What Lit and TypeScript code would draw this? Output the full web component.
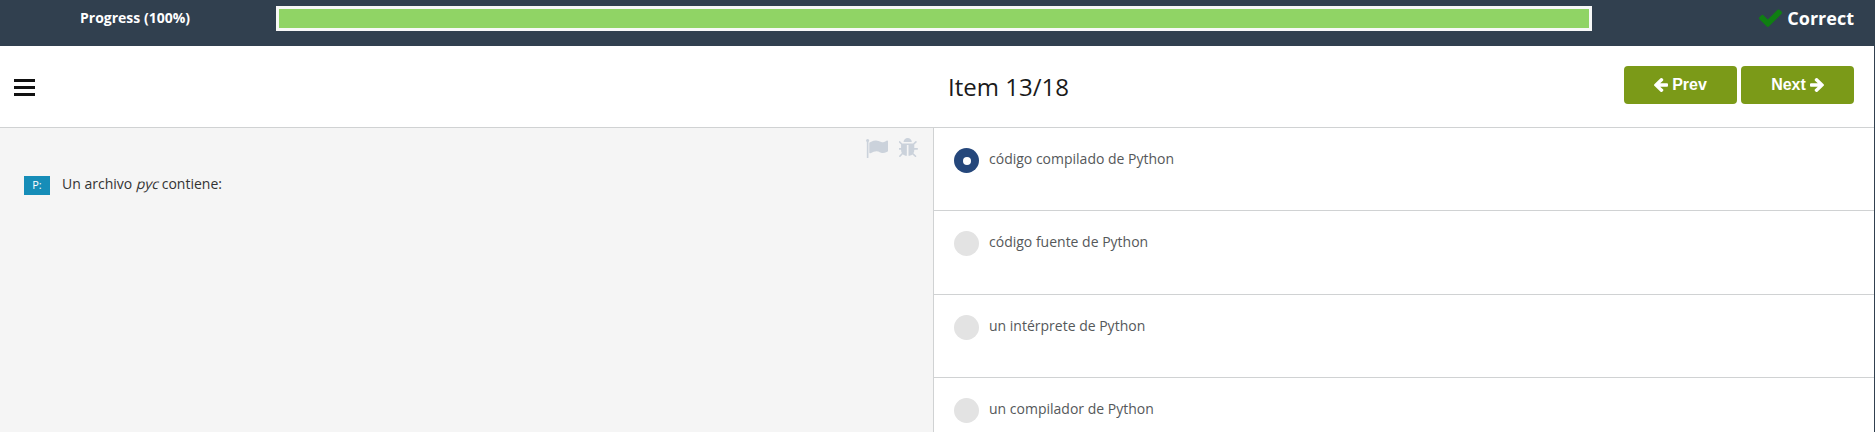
import { LitElement, html, css, svg } from "lit";
import { customElement, property } from "lit/decorators.js";

type IconName = "check" | "arrow" | "flag" | "bug" | "bars";

const ICONS: Record<IconName, { box: string; d: string }> = {
  check: {
    box: "121 306 1550 1216",
    d: "M1671 566q0 40-28 68l-724 724-136 136q-28 28-68 28t-68-28l-136-136-362-362q-28-28-28-68t28-68l136-136q28-28 68-28t68 28l294 295 656-657q28-28 68-28t68 28l136 136q28 28 28 68z",
  },
  arrow: {
    box: "192 181 1472 1558",
    d: "M1664 896v128q0 53-32.5 90.5t-84.5 37.5h-704l293 294q38 36 38 90t-38 90l-75 76q-37 37-90 37-52 0-91-37l-651-652q-37-37-37-90 0-52 37-91l651-650q38-38 91-38 52 0 90 38l75 74q38 38 38 91t-38 91l-293 293h704q52 0 84.5 37.5t32.5 90.5z",
  },
  flag: {
    box: "64 128 1728 1536",
    d: "M320 256q0 72-64 110v1266q0 13-9.5 22.5t-22.5 9.5h-64q-13 0-22.5-9.5t-9.5-22.5v-1266q-64-38-64-110 0-53 37.5-90.5t90.5-37.5 90.5 37.5 37.5 90.5zm1472 64v763q0 25-12.5 38.5t-39.5 27.5q-215 116-369 116-61 0-123.5-22t-108.5-48-115.5-48-142.5-22q-192 0-464 146-17 9-33 9-26 0-45-19t-19-45v-742q0-32 31-55 21-14 79-43 236-120 421-120 107 0 200 29t219 88q38 19 88 19 54 0 117.5-21t110-47 88-47 54.5-21q26 0 45 19t19 45z",
  },
  bug: {
    box: "160 96 1472 1568",
    d: "M1632 992q0 26-19 45t-45 19h-224q0 171-67 290l208 209q19 19 19 45t-19 45q-18 19-45 19t-45-19l-198-197q-5 5-15 13t-42 28.5-65 36.5-82 29-97 13v-896h-128v896q-51 0-101.5-13.5t-87-33-66-39-43.5-32.5l-15-14-183 207q-20 21-48 21-24 0-43-16-19-18-20.5-44.5t15.5-46.5l202-227q-58-114-58-274h-224q-26 0-45-19t-19-45 19-45 45-19h224v-294l-173-173q-19-19-19-45t19-45 45-19 45 19l173 173h844l173-173q19-19 45-19t45 19 19 45-19 45l-173 173v294h224q26 0 45 19t19 45zm-480-576h-640q0-133 93.5-226.5t226.5-93.5 226.5 93.5 93.5 226.5z",
  },
  bars: { box: "0 0 21 17", d: "M0 0h21v3H0zM0 7h21v3H0zM0 14h21v3H0z" },
};

const icon = (name: IconName, cls: string) => html`
  <svg class=${cls} viewBox=${ICONS[name].box} preserveAspectRatio="none" aria-hidden="true">
    ${svg`<path fill="currentColor" d=${ICONS[name].d}></path>`}
  </svg>
`;

@customElement("answer-option")
class AnswerOption extends LitElement {
  @property() label = "";
  @property({ type: Boolean }) checked = false;

  static styles = css`
    :host {
      display: flex;
      align-items: flex-start;
      box-sizing: border-box;
      height: 83.4px;
      padding: 20px 20px 0;
      border-bottom: 1px solid #d0d2d3;
    }
    .radio {
      flex: none;
      display: grid;
      place-items: center;
      width: 25px;
      height: 25px;
      border-radius: 50%;
      background: #e3e3e3;
    }
    .on {
      background: #25477b;
    }
    .dot {
      width: 8px;
      height: 8px;
      border-radius: 50%;
      background: #fff;
    }
    .label {
      margin-left: 10px;
      font-size: 14px;
      line-height: 22px;
      color: #55585a;
    }
  `;

  render() {
    return html`
      <span class="radio ${this.checked ? "on" : ""}">
        ${this.checked ? html`<span class="dot"></span>` : null}
      </span>
      <span class="label">${this.label}</span>
    `;
  }
}

@customElement("app-root")
class AppRoot extends LitElement {
  private answers = [
    "código compilado de Python",
    "código fuente de Python",
    "un intérprete de Python",
    "un compilador de Python",
  ];

  static styles = css`
    :host {
      display: flex;
      flex-direction: column;
      height: 432px;
      overflow: hidden;
      box-sizing: border-box;
      background: #fff;
      font-family: "Open Sans", sans-serif;
      color: #222;
    }
    svg {
      display: block;
      flex: none;
    }
    .top {
      flex: none;
      display: flex;
      align-items: flex-start;
      height: 46px;
      background: #31404f;
      color: #fff;
      font-weight: 700;
    }
    .progress-label {
      width: 196px;
      padding: 8px 0 0 80px;
      font-size: 14px;
      line-height: 20px;
    }
    .track {
      width: 1310px;
      height: 19px;
      margin-top: 6px;
      border: 3px solid #f7f8f7;
      background: #fff;
    }
    .fill {
      height: 100%;
      background: #90d465;
    }
    .status {
      flex: 1;
      display: flex;
      justify-content: flex-end;
      padding: 6px 21px 0 0;
      font-size: 18px;
      line-height: 25px;
    }
    .check {
      width: 23px;
      height: 18px;
      margin: 3px 5px 0 0;
      color: #0f7f12;
    }
    .page {
      flex: 1;
      min-height: 0;
      display: flex;
      flex-direction: column;
      border-right: 1px solid #31404f;
    }
    .bar {
      flex: none;
      display: grid;
      grid-template-columns: 948px 1fr auto;
      height: 81px;
      border-bottom: 1px solid #d0d2d3;
    }
    .bars {
      width: 21px;
      height: 17px;
      margin: 33px 0 0 14px;
      color: #111;
    }
    .title {
      margin: 0;
      padding-top: 24px;
      font-size: 24px;
      font-weight: 400;
      line-height: 33px;
      color: #1a1a1a;
    }
    .nav {
      display: flex;
      gap: 4px;
      padding: 20px 20px 0 0;
    }
    .btn {
      display: flex;
      align-items: center;
      justify-content: center;
      gap: 4px;
      width: 113px;
      height: 38px;
      padding: 0 0 1px;
      border: 0;
      border-radius: 4px;
      background: #7b9a18;
      color: #fff;
      font: 700 16px/20px "Liberation Sans", Arial, sans-serif;
    }
    .arrow {
      width: 14px;
      height: 14px;
      margin-top: 1px;
    }
    .flip {
      transform: scaleX(-1);
    }
    .body {
      flex: 1;
      min-height: 0;
      display: grid;
      grid-template-columns: 933px 1fr;
    }
    .question {
      box-sizing: border-box;
      background: #f5f5f5;
    }
    .tools {
      display: flex;
      justify-content: flex-end;
      gap: 11px;
      height: 19px;
      padding: 10px 15px 0 0;
      color: #cbd2db;
    }
    .flag {
      width: 22px;
      height: 19px;
      margin-top: 1px;
    }
    .bug {
      width: 19px;
      height: 19px;
    }
    .prompt {
      display: flex;
      align-items: flex-start;
      padding: 16px 0 0 24px;
      font-size: 14px;
      line-height: 22px;
      color: #333;
    }
    .prompt em {
      display: inline-block;
      margin: 0 -1px 0 1px;
      font-style: normal;
      transform: skewX(-14deg);
    }
    .tag {
      width: 26px;
      height: 19px;
      margin: 3px 12px 0 0;
      background: #168db8;
      color: #fff;
      font-size: 11px;
      line-height: 18px;
      text-align: center;
    }
    .answers {
      overflow: hidden;
      border-left: 1px solid #d0d2d3;
    }
  `;

  render() {
    return html`
      <header class="top">
        <div class="progress-label">Progress (100%)</div>
        <div class="track"><div class="fill"></div></div>
        <div class="status">${icon("check", "check")}<span>Correct</span></div>
      </header>
      <div class="page">
        <div class="bar">
          ${icon("bars", "bars")}
          <h1 class="title">Item 13/18</h1>
          <nav class="nav">
            <button class="btn">${icon("arrow", "arrow")}<span>Prev</span></button>
            <button class="btn"><span>Next</span>${icon("arrow", "arrow flip")}</button>
          </nav>
        </div>
        <main class="body">
          <section class="question">
            <div class="tools">${icon("flag", "flag")}${icon("bug", "bug")}</div>
            <div class="prompt">
              <span class="tag">P:</span>
              <span>Un archivo <em>pyc</em> contiene:</span>
            </div>
          </section>
          <section class="answers">
            ${this.answers.map(
              (a, i) => html`<answer-option .label=${a} .checked=${i === 0}></answer-option>`
            )}
          </section>
        </main>
      </div>
    `;
  }
}
